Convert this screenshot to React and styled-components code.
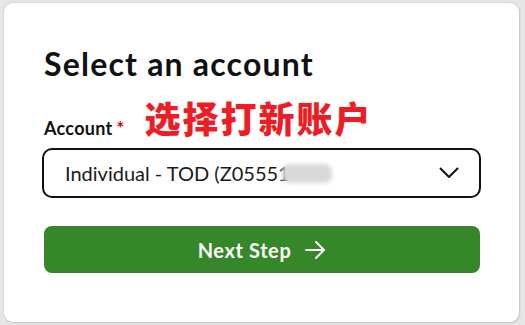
import React from "react";
import styled, { createGlobalStyle } from "styled-components";

const Global = createGlobalStyle`
  html, body { margin: 0; padding: 0; }
  body {
    background: #e6e6e6;
    font-family: Lato, "Noto Sans", sans-serif;
    width: 525px;
    height: 325px;
    overflow: hidden;
  }
`;

const Page = styled.div`
  box-sizing: border-box;
  width: 525px;
  height: 325px;
  padding: 3px 6px 3px 4px;
`;

const Card = styled.div`
  box-sizing: border-box;
  height: 100%;
  background: #ffffff;
  border-radius: 9px;
  box-shadow: 0 0 2px rgba(0, 0, 0, 0.18), 1px 1px 2px rgba(0, 0, 0, 0.1);
  padding: 41px 38px 0 38px;
  display: flex;
  flex-direction: column;
`;

const Title = styled.h1`
  margin: 0 0 0 2px;
  font-family: Lato, sans-serif;
  font-weight: 700;
  font-size: 32px;
  line-height: 40px;
  color: #111;
  letter-spacing: 1.2px;
`;

const LabelRow = styled.div`
  display: flex;
  align-items: flex-end;
  margin-top: 10px;
  height: 44px;
  padding-left: 2px;
`;

const Label = styled.span`
  font-family: Lato, sans-serif;
  font-weight: 700;
  font-size: 18px;
  color: #111;
  line-height: 20px;
  letter-spacing: 0.3px;
`;

const Required = styled.span`
  color: #d0021b;
  margin-left: 4px;
`;

const Annotation = styled.span`
  font-family: "Noto Sans CJK SC", sans-serif;
  font-weight: 900;
  font-size: 36px;
  line-height: 40px;
  color: #ee1d25;
  margin-left: 20px;
  margin-bottom: 1px;
  letter-spacing: 2px;
`;

const Select = styled.div`
  box-sizing: border-box;
  margin-top: 10px;
  width: 439px;
  height: 50px;
  border: 2px solid #111;
  border-radius: 10px;
  display: flex;
  align-items: center;
  justify-content: space-between;
  padding: 0 20px 0 21px;
`;

const Value = styled.span`
  display: flex;
  align-items: center;
  font-family: Lato, sans-serif;
  font-size: 20px;
  letter-spacing: 0px;
  color: #1a1a1a;
  white-space: nowrap;
`;

const Masked = styled.span`
  display: inline-block;
  width: 50px;
  height: 19px;
  margin-left: -8px;
  border-radius: 7px;
  background: #d9d9d9;
  filter: blur(2px);
`;

const Button = styled.button`
  box-sizing: border-box;
  margin-top: 28px;
  margin-left: 2px;
  width: 436px;
  height: 47px;
  border: none;
  border-radius: 8px;
  background: #368729;
  color: #fff;
  font-family: Lato, sans-serif;
  font-weight: 700;
  font-size: 20px;
  letter-spacing: 0.6px;
  display: flex;
  align-items: center;
  justify-content: center;
  gap: 14px;
  padding: 0;
`;

const Chevron = () => (
  <svg width="20" height="12" viewBox="0 0 20 12" fill="none">
    <path d="M1.5 1.5 L10 10 L18.5 1.5" stroke="#111" strokeWidth="2" strokeLinecap="round" strokeLinejoin="round" />
  </svg>
);

const Arrow = () => (
  <svg width="21" height="18" viewBox="0 0 21 18" fill="none">
    <path d="M1 9 H19 M11 1 L19 9 L11 17" stroke="#fff" strokeWidth="2" strokeLinecap="round" strokeLinejoin="round" />
  </svg>
);

export default function App() {
  return (
    <>
      <Global />
      <Page>
        <Card>
          <Title>Select an account</Title>
          <LabelRow>
            <Label>
              Account<Required>*</Required>
            </Label>
            <Annotation>选择打新账户</Annotation>
          </LabelRow>
          <Select>
            <Value>
              Individual - TOD (Z05551<Masked />
            </Value>
            <Chevron />
          </Select>
          <Button>
            Next Step
            <Arrow />
          </Button>
        </Card>
      </Page>
    </>
  );
}
